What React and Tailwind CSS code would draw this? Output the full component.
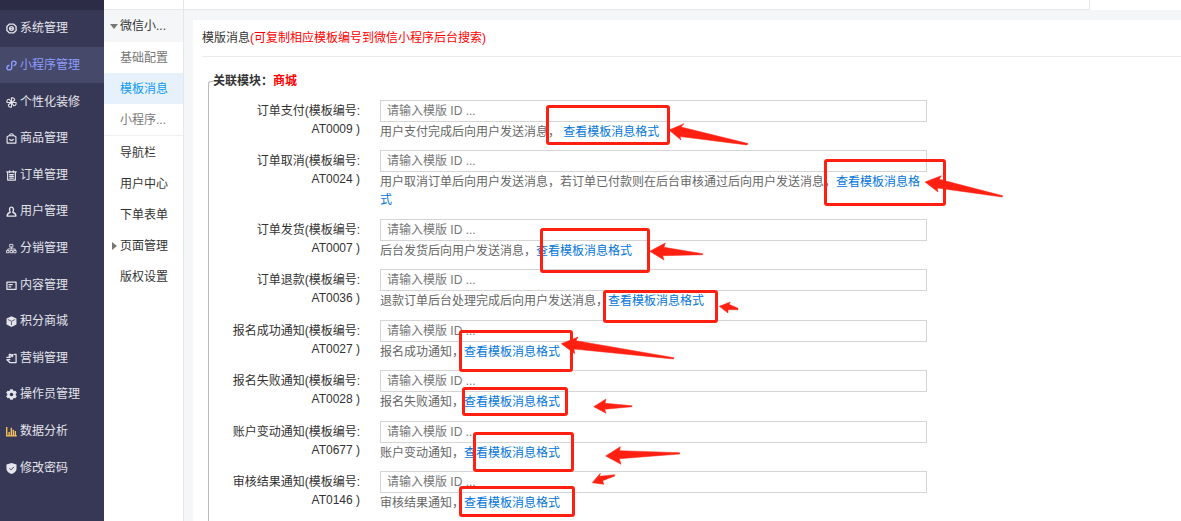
import React, { useState } from "react";

const stroke = { fill: "none", stroke: "currentColor", strokeWidth: 1.5, strokeLinejoin: "round", strokeLinecap: "round" };

const icons = {
  system: (
    <g {...stroke}>
      <path d="M3.800 1.200h4.400L11 3.800v4.400l-2.800 2.600H3.800L1 8.200V3.800z" />
      <circle cx="6" cy="6" r="2" />
      <path d="M4 6h4" strokeWidth="1" />
    </g>
  ),
  mini: (
    <g {...stroke}>
      <path d="M8.800 6C10.300 5.600 11 4.600 11 3.400 11 2 10 1.200 8.700 1.200S6.200 2.200 6.200 3.800v4.400c0 1.600-1 2.600-2.500 2.600S1 10 1 8.600 2 6.200 3.300 6" />
    </g>
  ),
  design: (
    <g {...stroke} strokeWidth="1.200">
      <path d="M6 6V1c2.400-.4 3.800 1 3.400 2.600L6 6zM6 6h5c.4 2.400-1 3.800-2.600 3.400L6 6zM6 6v5c-2.400.4-3.800-1-3.400-2.600L6 6zM6 6H1c-.4-2.400 1-3.800 2.600-3.400L6 6z" />
    </g>
  ),
  goods: (
    <g {...stroke} strokeWidth="1.300">
      <path d="M1.200 4l2-1h5.600l2 1v7H1.200zM4 3c0-1.400.8-2.200 2-2.200S8 1.600 8 3M4 7c1 1.500 3 1.500 4 0" />
    </g>
  ),
  order: (
    <g {...stroke} strokeWidth="1.300">
      <path d="M.8 2h10.400M1.800 2v9h8.400V2M4 .8v2M8 .8v2M4 5h4M4 7h4M4 8.900h4" />
    </g>
  ),
  user: (
    <g {...stroke}>
      <path d="M4.600 6.800C3.200 4.200 3.800 1.200 6 1.200s2.800 3 1.400 5.600c2 .6 3.400 1.400 3.400 4.200H1.200c0-2.800 1.400-3.600 3.400-4.200z" />
    </g>
  ),
  share: (
    <g {...stroke} strokeWidth="1">
      <path d="M4.500 1.500h3v3h-3zM6 4.500v2M2 8V6.500h8V8M1 8.200h2.300v2.500H1zM4.900 8.200h2.300v2.500H4.900zM8.700 8.200H11v2.500H8.700z" />
    </g>
  ),
  content: (
    <g {...stroke} strokeWidth="1.400">
      <path d="M1 2.200h10v8H1zM3.200 5h3.600M3.200 7.400h2" />
    </g>
  ),
  points: (
    <g>
      <path fill="currentColor" d="M6 .2l5.400 2.600v6.400L6 12 .6 9.200V2.800z" />
      <path d="M2 3.800l4 2 4-2M6 6v4" fill="none" stroke="#363856" strokeWidth=".8" />
    </g>
  ),
  market: (
    <g {...stroke} strokeWidth="1.400">
      <path d="M3.600 5V1.600h1.800v2.200M5.400 3.800l1.800-2v2M8.800 1.600H11v8.800H4.200L1 7.400M1 4.800h3.400M1.400 7.200h2.800" />
    </g>
  ),
  operator: (
    <g>
      <path fill="currentColor" d="M4.600.2h2.800l.4 1.500 1 .6 1.500-.5 1.500 2.400-1.200 1.200v1.200l1.200 1.200-1.500 2.400-1.500-.5-1 .6-.4 1.500H4.600l-.4-1.500-1-.6-1.500.5L.2 7.800l1.200-1.200V5.400L.2 4.200l1.500-2.400 1.500.5 1-.6z" />
      <circle cx="6" cy="6" r="1.900" fill="#363856" />
    </g>
  ),
  data: (
    <g fill="none" stroke="#f7c35c" strokeWidth="1.500">
      <path d="M.8 1v9.800h11M3.400 10V6.500M5.800 10V2M8 10V4M10.200 10V5.500" />
    </g>
  ),
  password: (
    <g>
      <path fill="currentColor" d="M6 0l5.500 1.600v4.600c0 2.600-2.500 4.700-5.500 5.800C3 10.900.5 8.800.5 6.200V1.600z" />
      <path d="M3.800 5.800l1.700 1.700 3-3.200" fill="none" stroke="#363856" strokeWidth="1" />
    </g>
  ),
};

const menus = [
  { icon: "system", name: "系统管理" },
  { icon: "mini", name: "小程序管理" },
  { icon: "design", name: "个性化装修" },
  { icon: "goods", name: "商品管理" },
  { icon: "order", name: "订单管理" },
  { icon: "user", name: "用户管理" },
  { icon: "share", name: "分销管理" },
  { icon: "content", name: "内容管理" },
  { icon: "points", name: "积分商城" },
  { icon: "market", name: "营销管理" },
  { icon: "operator", name: "操作员管理" },
  { icon: "data", name: "数据分析" },
  { icon: "password", name: "修改密码" },
];

const templates = [
  { title: "订单支付", code: "AT0009", help: "用户支付完成后向用户发送消息， " },
  { title: "订单取消", code: "AT0024", help: "用户取消订单后向用户发送消息，若订单已付款则在后台审核通过后向用户发送消息，" },
  { title: "订单发货", code: "AT0007", help: "后台发货后向用户发送消息，" },
  { title: "订单退款", code: "AT0036", help: "退款订单后台处理完成后向用户发送消息，" },
  { title: "报名成功通知", code: "AT0027", help: "报名成功通知，" },
  { title: "报名失败通知", code: "AT0028", help: "报名失败通知，" },
  { title: "账户变动通知", code: "AT0677", help: "账户变动通知，" },
  { title: "审核结果通知", code: "AT0146", help: "审核结果通知，" },
];

// red marks drawn over the form
const boxes = [
  [547.5, 106.5, 121, 37],
  [825.5, 160.5, 119, 44],
  [541.5, 229.5, 107, 42],
  [604.5, 291.5, 112, 30],
  [460.5, 331.5, 111, 39],
  [463.5, 388.5, 103, 26],
  [474.5, 433.5, 98, 37],
  [460.5, 487.5, 113, 28],
];

const arrows = [
  "669,130 684,123.7 681,127 748,143.5 747,145 680,136.5 681,140",
  "925,182 941.3,175.7 939.3,179.3 1002.7,195.7 1002.3,197 937.3,188 938,192",
  "649.7,251.3 665.3,243 664,247.3 702.7,253.7 702.7,254.7 662.7,255.7 664,260",
  "719.3,306.3 730.3,302 729,304.3 738,308.3 738,309.7 728,309.7 728,313",
  "561.3,343.7 578,337 576,340.7 674,357.7 673.3,359 574,349 574.7,353.7",
  "593.7,406.7 606,399 605,403.3 632,405.7 632,406.7 604.7,409.3 606,413.3",
  "605.7,456 620.3,446.7 619.7,450.7 679.7,452.7 679.7,454 619.3,458.7 621,464.3",
  "592.3,482.7 600.3,473.3 599.7,476.3 614.7,474.7 614.7,476 602.7,480.7 603.7,484.3",
];

function Sidebar() {
  return (
    <aside className="w-[104px] shrink-0 bg-[#363856] text-[#e4e4ea]">
      <div className="h-[10px] bg-[#2d2c46]" />
      <nav className="flex h-[476px] flex-col">
        {menus.map((menu) => (
          <a
            key={menu.name}
            href="#"
            className={`flex flex-1 items-center gap-[3px] pl-[6px] whitespace-nowrap ${menu.icon === "mini" ? "bg-[#464969] text-[#8c9cff]" : ""}`}
          >
            <svg viewBox="0 0 12 12" className="mt-px h-[11px] w-[11px] shrink-0" aria-hidden="true">{icons[menu.icon]}</svg>
            <span>{menu.name}</span>
          </a>
        ))}
      </nav>
    </aside>
  );
}

function SubMenu() {
  return (
    <aside className="w-[80px] shrink-0 border-r border-[#e7e7ea] bg-white text-[#333]">
      <div className="h-[10px] border-b border-[#e7e7ea]" />
      <nav className="flex flex-col whitespace-nowrap">
        <a href="#" className="flex h-8 items-center gap-[2px] bg-[#f5f6f8] pl-[6px]">
          <svg viewBox="0 0 8 8" className="h-2 w-2" aria-hidden="true"><path d="M0 2h8L4 7z" fill="#777" /></svg>
          微信小...
        </a>
        <div className="mb-px flex flex-col border-b border-[#f0f0f2] text-[#777]">
          <a href="#" className="flex h-[31px] items-center pl-4">基础配置</a>
          <a href="#" className="flex h-[31px] items-center bg-[#e6f1fc] pl-4 text-[#0e9aef]">模板消息</a>
          <a href="#" className="flex h-[31px] items-center pl-4">小程序...</a>
        </div>
        <a href="#" className="flex h-[31px] items-center pl-4">导航栏</a>
        <a href="#" className="flex h-[31px] items-center pl-4">用户中心</a>
        <a href="#" className="flex h-[31px] items-center pl-4">下单表单</a>
        <a href="#" className="flex h-[31px] items-center gap-[2px] pl-[6px]">
          <svg viewBox="0 0 8 8" className="h-2 w-2" aria-hidden="true"><path d="M2 0v8l5-4z" fill="#777" /></svg>
          页面管理
        </a>
        <a href="#" className="flex h-[31px] items-center pl-4">版权设置</a>
      </nav>
    </aside>
  );
}

function TemplateRow({ item, value, onChange }) {
  const id = `tpl-${item.code}`;
  return (
    <div className="flex gap-5">
      <label htmlFor={id} className="w-[132px] shrink-0 pt-[2px] text-right">
        {item.title}(模板编号: {item.code} )
      </label>
      <div className="w-full max-w-[547px]">
        <input
          id={id}
          type="text"
          value={value}
          onChange={onChange}
          placeholder="请输入模版 ID ..."
          className="mb-px block h-[22px] w-full border border-[#d5d5d5] bg-white px-[6px] outline-none placeholder:text-[#777]"
        />
        <p className="text-[#666]">
          {item.help}
          <a href="#" className="text-[#0275d8]">查看模板消息格式</a>
        </p>
      </div>
    </div>
  );
}

function Marks() {
  return (
    <svg className="pointer-events-none absolute top-0 left-0 h-[521px] w-[1181px]" aria-hidden="true">
      {boxes.map(([x, y, w, h]) => (
        <rect key={`${x}-${y}`} x={x} y={y} width={w} height={h} rx="1.5" fill="none" stroke="#ff2012" strokeWidth="3" />
      ))}
      {arrows.map((points) => (
        <polygon key={points} points={points} fill="#ff2012" stroke="#ff2012" strokeWidth=".5" />
      ))}
    </svg>
  );
}

export default function App() {
  const [values, setValues] = useState({});

  return (
    <div className="relative flex h-screen overflow-hidden bg-[#f5f6f8] font-['Liberation_Sans','Noto_Sans_CJK_SC',sans-serif] text-[12px] leading-[18px] text-[#333]">
      <Sidebar />
      <SubMenu />

      <div className="flex min-w-0 flex-1 flex-col">
        <header className="flex h-[10px] shrink-0 bg-white">
          <div className="flex-1 border-r border-b border-[#e9e9ec]" />
          <div className="w-[91px]" />
        </header>

        <main className="mt-[10px] ml-[9px] flex flex-1 flex-col bg-white pl-[9px]">
          <h1 className="border-b border-[#ebebeb] pt-[9px] pb-[9px]">
            模版消息<span className="text-[#f00]">(可复制相应模板编号到微信小程序后台搜索)</span>
          </h1>

          <fieldset className="mt-[15px] ml-[6px] flex-1 rounded-tl-[3px] border-t border-l border-[#bbb] pl-[4px]">
            <legend className="w-full font-bold">
              关联模块：<span className="text-[#f00]">商城</span>
            </legend>
            <div className="box-content flex min-h-[412px] flex-col justify-between pt-[10px] pl-[15px]">
              {templates.map((item) => (
                <TemplateRow
                  key={item.code}
                  item={item}
                  value={values[item.code] || ""}
                  onChange={(e) => setValues({ ...values, [item.code]: e.target.value })}
                />
              ))}
            </div>
          </fieldset>
        </main>
      </div>

      <Marks />
    </div>
  );
}
